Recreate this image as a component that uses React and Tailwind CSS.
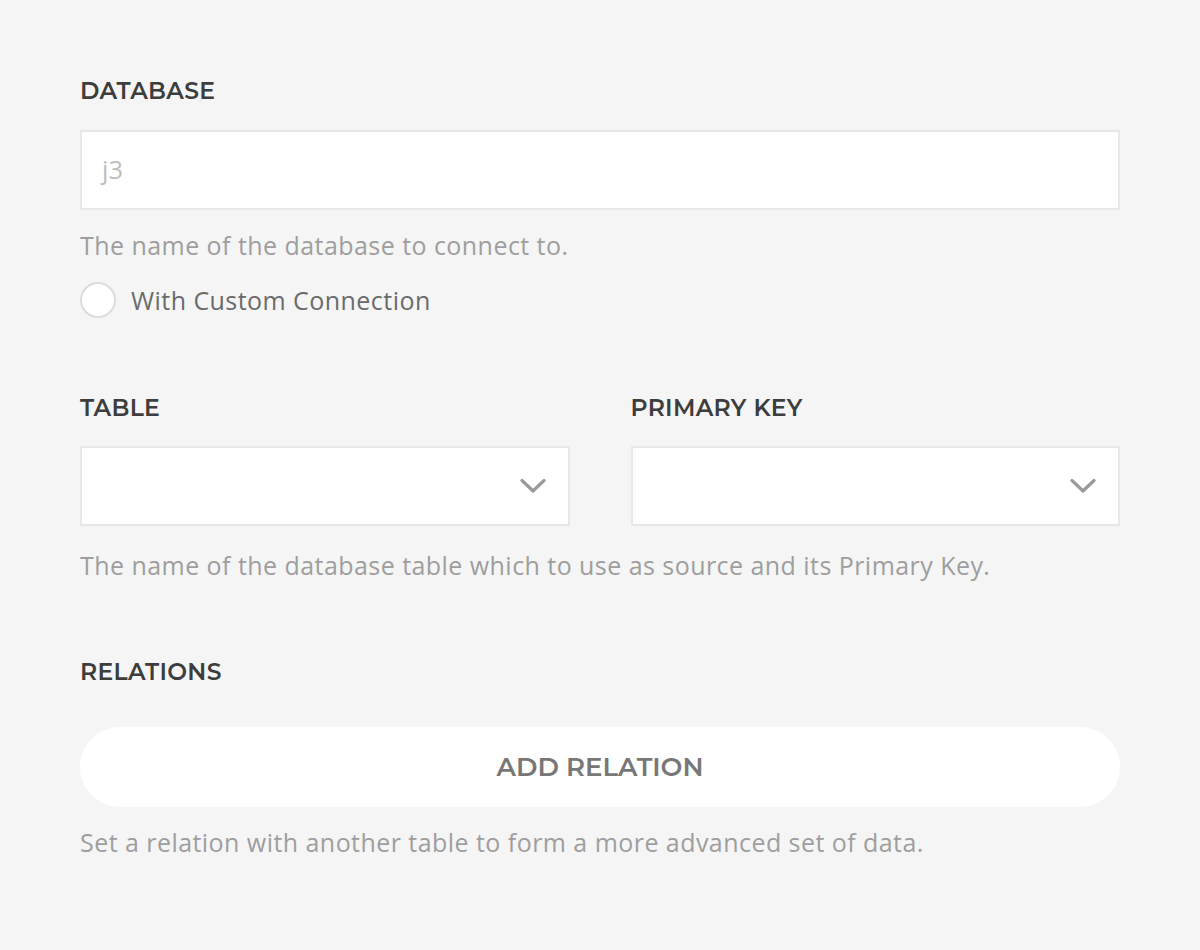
const heading = { fontFamily: "Montserrat, Inter, 'Noto Sans', sans-serif" };
const body = { fontFamily: "'Open Sans', 'Noto Sans', sans-serif" };

const Label = ({ children, className = "" }) => (
  <div
    style={heading}
    className={`text-[23.5px] leading-[26px] font-semibold text-[#3d3d3d] tracking-[0.3px] ${className}`}
  >
    {children}
  </div>
);

const Help = ({ children, className = "" }) => (
  <p
    style={body}
    className={`text-[25px] leading-[32px] tracking-[0.45px] text-[#9e9e9e] ${className}`}
  >
    {children}
  </p>
);

const Chevron = () => (
  <svg width="26" height="16" viewBox="0 0 26 16" fill="none" className="text-[#9a9a9a]">
    <polyline
      points="2,2.5 13,13 24,2.5"
      stroke="currentColor"
      strokeWidth="3.2"
      strokeLinecap="round"
      strokeLinejoin="round"
    />
  </svg>
);

const Select = () => (
  <div className="flex h-[80px] w-full items-center justify-end border-2 border-[#e8e8e8] bg-white pr-[22px]">
    <Chevron />
  </div>
);

export default function App() {
  return (
    <div className="min-h-screen bg-[#f5f5f5] px-[80px] pt-[78px]">
      <Label>DATABASE</Label>
      <div className="mt-[26px] flex h-[80px] items-center border-2 border-[#e8e8e8] bg-white px-[20px]">
        <span style={body} className="text-[25px] tracking-[0.45px] text-[#bdbdbd]">
          j3
        </span>
      </div>
      <Help className="mt-[19px]">The name of the database to connect to.</Help>
      <div className="mt-[21px] flex items-center gap-[15px]">
        <span className="h-[36px] w-[36px] rounded-full border-2 border-[#dcdcdc] bg-white" />
        <span
          style={body}
          className="text-[25px] leading-[32px] tracking-[0.45px] text-[#6b6b6b]"
        >
          With Custom Connection
        </span>
      </div>

      <div className="mt-[77px] grid grid-cols-2 gap-[61px]">
        <div>
          <Label>TABLE</Label>
          <div className="mt-[25px]">
            <Select />
          </div>
        </div>
        <div>
          <Label>PRIMARY KEY</Label>
          <div className="mt-[25px]">
            <Select />
          </div>
        </div>
      </div>
      <Help className="mt-[23px]">
        The name of the database table which to use as source and its Primary Key.
      </Help>

      <Label className="mt-[78px]">RELATIONS</Label>
      <button
        type="button"
        style={heading}
        className="mt-[42px] flex h-[80px] w-full items-center justify-center rounded-full bg-white text-[26px] font-semibold text-[#777777]"
      >
        ADD RELATION
      </button>
      <Help className="mt-[19px]">
        Set a relation with another table to form a more advanced set of data.
      </Help>
    </div>
  );
}
